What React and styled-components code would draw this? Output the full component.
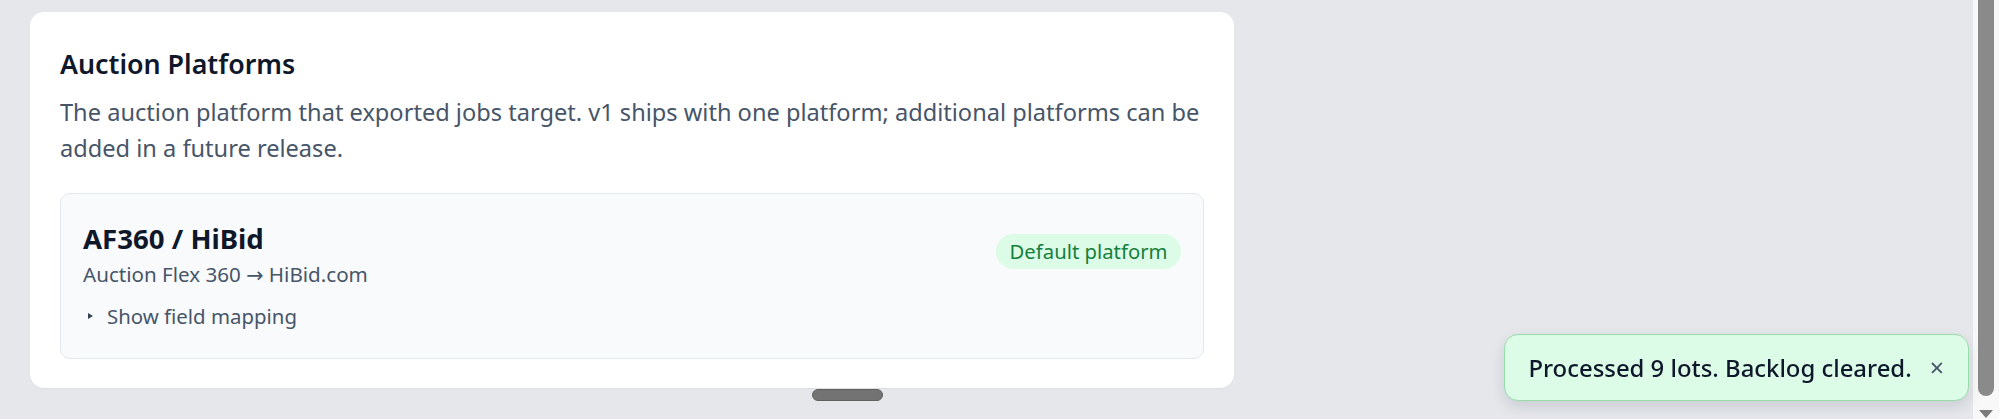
import React from "react";
import styled, { createGlobalStyle } from "styled-components";

const GlobalStyle = createGlobalStyle`
  html, body {
    margin: 0;
    height: 100%;
    overflow: hidden;
    background: #e5e7eb;
    font-family: "Noto Sans", "DejaVu Sans", sans-serif;
  }
  #root {
    height: 100%;
  }
`;

const Page = styled.div`
  display: flex;
  height: 100vh;
`;

const Main = styled.main`
  flex: 1;
  padding: 12px 0 0 30px;
  box-sizing: border-box;
`;

const Card = styled.section`
  width: 1204px;
  box-sizing: border-box;
  padding: 31px 30px 29px;
  background: #ffffff;
  border-radius: 14px;
  box-shadow: 0 1px 2px rgba(15, 23, 42, 0.04);
`;

const Heading = styled.h2`
  margin: 0;
  font-size: 26.8px;
  line-height: 42px;
  font-weight: 600;
  color: #0f172a;
`;

const Description = styled.p`
  margin: 10px 0 27px;
  font-size: 23.6px;
  line-height: 35.7px;
  color: #475569;
`;

const Platform = styled.div`
  background: #f8fafc;
  border: 1px solid #e2e8f0;
  border-radius: 10px;
  padding: 25px 22px 27px;
`;

const PlatformHead = styled.div`
  display: flex;
  align-items: center;
  justify-content: space-between;
`;

const PlatformName = styled.div`
  font-size: 27.6px;
  line-height: 38px;
  font-weight: 700;
  color: #0f172a;
`;

const PlatformRoute = styled.div`
  margin-top: 2px;
  font-size: 20.6px;
  line-height: 30px;
  color: #475569;
`;

const Badge = styled.span`
  display: inline-flex;
  align-items: center;
  height: 35px;
  padding: 0 13.5px;
  margin-top: -6px;
  border-radius: 999px;
  background: #dcfce7;
  color: #15803d;
  font-size: 20.3px;
`;

const Toggle = styled.div`
  display: flex;
  align-items: center;
  gap: 14px;
  margin-top: 12px;
  padding-left: 5px;
  font-size: 20.4px;
  line-height: 30px;
  color: #475569;
`;

const Caret = styled.span`
  width: 0;
  height: 0;
  border-left: 5px solid #374151;
  border-top: 3.5px solid transparent;
  border-bottom: 3.5px solid transparent;
`;

const Handle = styled.div`
  position: fixed;
  left: 812px;
  top: 389px;
  width: 71px;
  height: 12px;
  box-sizing: border-box;
  border-radius: 6px;
  background: #737373;
  border: 1px solid #5f6060;
`;

const Toast = styled.div`
  position: fixed;
  right: 30px;
  bottom: 18px;
  height: 67px;
  box-sizing: border-box;
  display: flex;
  align-items: center;
  gap: 18px;
  padding: 0 24px 0 23px;
  background: #dcfce7;
  border: 1.5px solid #98dcaa;
  border-radius: 14px;
  box-shadow: 0 6px 14px rgba(15, 23, 42, 0.12);
  color: #0f172a;
  font-size: 23.9px;
  font-weight: 500;
`;

const Close = styled.span`
  color: #475569;
  font-size: 25px;
  font-weight: 400;
  line-height: 1;
`;

const ScrollTrack = styled.div`
  width: 26px;
  flex: none;
  display: flex;
  flex-direction: column;
  align-items: center;
  background: #f8f8f8;
`;

const ScrollThumb = styled.div`
  width: 16px;
  height: 406px;
  margin-top: -10px;
  border-radius: 8px;
  background: #8a8a8a;
`;

const ScrollArrow = styled.div`
  margin-top: 14px;
  width: 0;
  height: 0;
  border-top: 8px solid #7a7a7a;
  border-left: 7px solid transparent;
  border-right: 7px solid transparent;
`;

export default function App() {
  return (
    <>
      <GlobalStyle />
      <Page>
        <Main>
          <Card>
            <Heading>Auction Platforms</Heading>
            <Description>
              The auction platform that exported jobs target. v1 ships with one
              platform; additional platforms can be added in a future release.
            </Description>
            <Platform>
              <PlatformHead>
                <div>
                  <PlatformName>AF360 / HiBid</PlatformName>
                  <PlatformRoute>Auction Flex 360 → HiBid.com</PlatformRoute>
                </div>
                <Badge>Default platform</Badge>
              </PlatformHead>
              <Toggle>
                <Caret />
                Show field mapping
              </Toggle>
            </Platform>
          </Card>
        </Main>
        <ScrollTrack>
          <ScrollThumb />
          <ScrollArrow />
        </ScrollTrack>
      </Page>
      <Handle />
      <Toast>
        Processed 9 lots. Backlog cleared.
        <Close>×</Close>
      </Toast>
    </>
  );
}
